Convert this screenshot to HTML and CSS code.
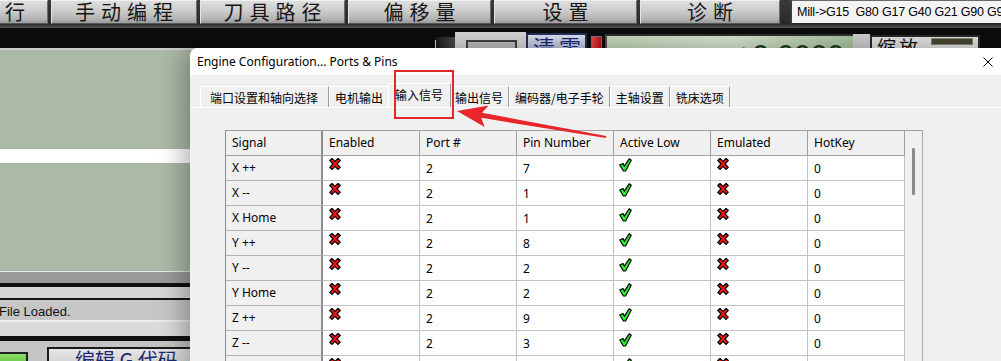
FILE: index.html
```html
<!DOCTYPE html>
<html lang="zh">
<head>
<meta charset="utf-8">
<title>Engine Configuration... Ports &amp; Pins</title>
<link rel="stylesheet" href="styles.css">
</head>
<body>
<div class="app">
  <div class="menubar">
    <div class="mbtn first">行</div>
    <div class="mbtn w146">手动编程</div>
    <div class="mbtn w145">刀具路径</div>
    <div class="mbtn w143">偏移量</div>
    <div class="mbtn w143">设置</div>
    <div class="mbtn w140">诊断</div>
    <div class="gcode">Mill-&gt;G15&nbsp; G80 G17 G40 G21 G90 G94 G54 G49 G99 G64 G97</div>
  </div>
  <div class="toolrow">
    <div class="tr-tick"></div>
    <div class="tr-dark"></div>
    <div class="tr-panel"><div class="tr-btn"></div></div>
    <div class="tr-zero">清零</div>
    <div class="tr-led"></div>
    <div class="tr-dro">+0.0000</div>
    <div class="tr-gap"></div>
    <div class="tr-zoom">缩放<span class="tr-zoombar"></span></div>
  </div>
  <div class="leftpanel">
    <div class="lp lp-top"></div>
    <div class="lp lp-green g1"></div>
    <div class="lp lp-white"></div>
    <div class="lp lp-green g2"></div>
    <div class="lp lp-hl"></div>
    <div class="lp lp-mid"></div>
    <div class="lp lp-black4"></div>
    <div class="lp lp-light"></div>
    <div class="lp lp-black2"></div>
    <div class="lp status">File Loaded.</div>
    <div class="lp lp-hl2"></div>
    <div class="lp lp-light2"></div>
    <div class="lp lp-black5"></div>
    <div class="lp-buttons">
      <div class="gbtn"></div>
      <div class="editbtn">编辑 G 代码</div>
    </div>
  </div>
</div>

<div class="dialog">
  <div class="titlebar">
    <span class="title">Engine Configuration... Ports &amp; Pins</span>
    <svg class="close" width="10" height="10" viewBox="0 0 10 10"><path d="M0.5 0.5 L9.5 9.5 M9.5 0.5 L0.5 9.5" stroke="#000" stroke-width="1" fill="none"/></svg>
  </div>
  <div class="tabs">
    <div class="tab wide">端口设置和轴向选择</div>
    <div class="tab">电机输出</div>
    <div class="tab active">输入信号</div>
    <div class="tab">输出信号</div>
    <div class="tab">编码器/电子手轮</div>
    <div class="tab">主轴设置</div>
    <div class="tab">铣床选项</div>
  </div>
  <div class="tabpanel">
    <div class="table">
      <div class="grid">
        <div class="hc first">Signal</div>
        <div class="hc">Enabled</div>
        <div class="hc">Port #</div>
        <div class="hc">Pin Number</div>
        <div class="hc">Active Low</div>
        <div class="hc">Emulated</div>
        <div class="hc">HotKey</div>

        <div class="rh">X ++</div><div class="dc"><svg class="ix" viewBox="0 0 12 12"><use href="#xicon"/></svg></div><div class="dc">2</div><div class="dc">7</div><div class="dc"><svg class="ic" viewBox="0 0 13 14"><use href="#checkicon"/></svg></div><div class="dc"><svg class="ix" viewBox="0 0 12 12"><use href="#xicon"/></svg></div><div class="dc">0</div>
        <div class="rh">X --</div><div class="dc"><svg class="ix" viewBox="0 0 12 12"><use href="#xicon"/></svg></div><div class="dc">2</div><div class="dc">1</div><div class="dc"><svg class="ic" viewBox="0 0 13 14"><use href="#checkicon"/></svg></div><div class="dc"><svg class="ix" viewBox="0 0 12 12"><use href="#xicon"/></svg></div><div class="dc">0</div>
        <div class="rh">X Home</div><div class="dc"><svg class="ix" viewBox="0 0 12 12"><use href="#xicon"/></svg></div><div class="dc">2</div><div class="dc">1</div><div class="dc"><svg class="ic" viewBox="0 0 13 14"><use href="#checkicon"/></svg></div><div class="dc"><svg class="ix" viewBox="0 0 12 12"><use href="#xicon"/></svg></div><div class="dc">0</div>
        <div class="rh">Y ++</div><div class="dc"><svg class="ix" viewBox="0 0 12 12"><use href="#xicon"/></svg></div><div class="dc">2</div><div class="dc">8</div><div class="dc"><svg class="ic" viewBox="0 0 13 14"><use href="#checkicon"/></svg></div><div class="dc"><svg class="ix" viewBox="0 0 12 12"><use href="#xicon"/></svg></div><div class="dc">0</div>
        <div class="rh">Y --</div><div class="dc"><svg class="ix" viewBox="0 0 12 12"><use href="#xicon"/></svg></div><div class="dc">2</div><div class="dc">2</div><div class="dc"><svg class="ic" viewBox="0 0 13 14"><use href="#checkicon"/></svg></div><div class="dc"><svg class="ix" viewBox="0 0 12 12"><use href="#xicon"/></svg></div><div class="dc">0</div>
        <div class="rh">Y Home</div><div class="dc"><svg class="ix" viewBox="0 0 12 12"><use href="#xicon"/></svg></div><div class="dc">2</div><div class="dc">2</div><div class="dc"><svg class="ic" viewBox="0 0 13 14"><use href="#checkicon"/></svg></div><div class="dc"><svg class="ix" viewBox="0 0 12 12"><use href="#xicon"/></svg></div><div class="dc">0</div>
        <div class="rh">Z ++</div><div class="dc"><svg class="ix" viewBox="0 0 12 12"><use href="#xicon"/></svg></div><div class="dc">2</div><div class="dc">9</div><div class="dc"><svg class="ic" viewBox="0 0 13 14"><use href="#checkicon"/></svg></div><div class="dc"><svg class="ix" viewBox="0 0 12 12"><use href="#xicon"/></svg></div><div class="dc">0</div>
        <div class="rh">Z --</div><div class="dc"><svg class="ix" viewBox="0 0 12 12"><use href="#xicon"/></svg></div><div class="dc">2</div><div class="dc">3</div><div class="dc"><svg class="ic" viewBox="0 0 13 14"><use href="#checkicon"/></svg></div><div class="dc"><svg class="ix" viewBox="0 0 12 12"><use href="#xicon"/></svg></div><div class="dc">0</div>
        <div class="rh">Z Home</div><div class="dc"><svg class="ix" viewBox="0 0 12 12"><use href="#xicon"/></svg></div><div class="dc">2</div><div class="dc">3</div><div class="dc"><svg class="ic" viewBox="0 0 13 14"><use href="#checkicon"/></svg></div><div class="dc"><svg class="ix" viewBox="0 0 12 12"><use href="#xicon"/></svg></div><div class="dc">0</div>
      </div>
      <div class="vscroll"><div class="thumb"></div></div>
    </div>
  </div>
</div>

<div class="redbox"></div>
<svg class="arrow" width="1001" height="361" viewBox="0 0 1001 361">
  <polygon points="457,111 488.5,105.4 482,112.8 606.2,136 605.8,138 481.2,117.8 484.7,127" fill="#e8262a"/>
</svg>

<svg class="defs" width="0" height="0">
  <defs>
    <g id="xicon">
      <polygon points="0.8,2.4 3,0.4 6,3.4 9,0.4 11.2,2.4 8.1,5.8 11.2,9.2 9,11.4 6,8.3 3,11.4 0.8,9.4 3.9,5.8" fill="#f21414" stroke="#000" stroke-width="1.2" stroke-linejoin="miter"/>
    </g>
    <g id="checkicon">
      <polygon points="0.8,7 4,5.6 5.4,8 10.2,0.8 12.2,2.2 6.6,13 4.4,13" fill="#2cf02c" stroke="#000" stroke-width="1.2" stroke-linejoin="miter"/>
    </g>
  </defs>
</svg>
</body>
</html>
```
FILE: styles.css
```css
html, body {
  margin: 0;
  padding: 0;
  width: 1001px;
  height: 361px;
  overflow: hidden;
  background: #0c0c0c;
}
body {
  position: relative;
  font-family: "Noto Sans", "Noto Sans CJK SC", sans-serif;
}
.app {
  width: 1001px;
  height: 361px;
  display: flex;
  flex-direction: column;
}

/* top menu bar */
.menubar {
  height: 28px;
  display: flex;
  gap: 3px;
  background: linear-gradient(#3a3a3a, #2a2a2a 85%, #555 100%);
  flex: none;
}
.mbtn {
  height: 24px;
  box-sizing: border-box;
  background: linear-gradient(#dedede 0%, #cfcfcf 40%, #b4b4b4 80%, #9c9c9c 100%);
  border-top: 1px solid #f2f2f2;
  border-left: 1px solid #e6e6e6;
  border-right: 1px solid #6a6a6a;
  border-bottom: 1px solid #555;
  font-family: "Noto Sans CJK SC", sans-serif;
  font-size: 20px;
  letter-spacing: 6px;
  color: #151515;
  line-height: 22px;
  text-align: center;
  padding-left: 6px;
  white-space: nowrap;
}
.mbtn.first { width: 48px; text-align: left; padding-left: 5px; border-left: none; }
.w146 { width: 146px; }
.w145 { width: 145px; }
.w143 { width: 143px; }
.w140 { width: 140px; }
.gcode {
  margin-left: 7px;
  flex: 1;
  min-width: 0;
  height: 23px;
  box-sizing: border-box;
  background: #f4f4f4;
  border-left: 2px solid #3c3c3c;
  border-top: 1px solid #6a6a6a;
  font-family: "Liberation Sans", Arial, sans-serif;
  font-size: 12.5px;
  letter-spacing: -0.2px;
  line-height: 22px;
  padding-left: 5px;
  white-space: nowrap;
  overflow: hidden;
  color: #000;
}

/* second tool row */
.toolrow {
  height: 20px;
  flex: none;
  display: flex;
  align-items: stretch;
  background: #0c0c0c;
}
.tr-tick { margin-left: 435px; width: 1px; margin-top: 12px; background: #d8d8d8; }
.tr-dark { width: 19px; margin-top: 9px; background: linear-gradient(90deg, #1a1a1a, #4a4a4a); }
.tr-panel { width: 71px; margin-top: 4px; background: #d6d6d6; padding: 8px 0 0 11px; box-sizing: border-box; }
.tr-btn { width: 51px; height: 100%; box-sizing: border-box; border: 2px solid #404040; border-bottom: none; background: #bdbdbd; }
.tr-zero {
  width: 61px;
  margin-top: 5px;
  box-sizing: border-box;
  border: 2px solid #25305a;
  border-bottom: none;
  background: linear-gradient(#dce2f0, #bcc6de);
  font-family: "Noto Sans CJK SC", sans-serif;
  font-size: 22px;
  letter-spacing: 4px;
  line-height: 22px;
  color: #1c2a78;
  padding-left: 5px;
  overflow: hidden;
}
.tr-led { width: 11px; margin: 8px 0 0 4px; box-sizing: border-box; border: 1px solid #777; border-bottom: none; background: linear-gradient(90deg, #f04848, #c01010); }
.tr-dro {
  width: 248px;
  margin: 6px 0 0 3px;
  box-sizing: border-box;
  border-top: 2px solid #303030;
  border-left: 2px solid #505050;
  background: linear-gradient(90deg, #c4d8bc, #d8e6d0 50%, #a8c4a0);
  font-family: "Liberation Sans", Arial, sans-serif;
  font-size: 30px;
  line-height: 30px;
  padding-top: 4px;
  padding-right: 9px;
  text-align: right;
  color: #1c3a1c;
  overflow: hidden;
  white-space: nowrap;
}
.tr-gap { width: 17px; margin-top: 6px; background: #cfcfcf; }
.tr-zoom {
  width: 110px;
  margin-top: 7px;
  box-sizing: border-box;
  border: 2px solid #2a2a2a;
  border-bottom: none;
  background: #e4e4e4;
  font-family: "Noto Sans CJK SC", sans-serif;
  font-size: 19px;
  letter-spacing: 3px;
  line-height: 19px;
  padding-left: 5px;
  color: #111;
  display: flex;
  overflow: hidden;
  white-space: nowrap;
}
.tr-zoombar { width: 40px; height: 5px; margin: 1px 0 0 10px; background: #4a4632; border: 1px solid #8a8a7a; flex: none; }

/* left area */
.leftpanel {
  width: 200px;
  flex: 1;
  display: flex;
  flex-direction: column;
  background: #c6c6c6;
}
.lp { flex: none; }
.lp-top { height: 2px; background: #cfcfcf; }
.lp-green { background: #abb9a7; }
.g1 { height: 99px; }
.lp-white { height: 14px; background: #ffffff; }
.g2 { height: 108px; }
.lp-hl { height: 1px; background: #e8e8e8; }
.lp-mid { height: 11px; background: #9a9a9a; }
.lp-black4 { height: 4px; background: #101010; }
.lp-light { height: 11px; background: #d6d6d6; }
.lp-black2 { height: 2px; background: #151515; }
.status {
  height: 20px;
  background: #c6c6c6;
  font-family: "Liberation Sans", Arial, sans-serif;
  font-size: 13px;
  line-height: 24px;
  color: #111;
  margin-left: -1px;
  white-space: nowrap;
}
.lp-hl2 { height: 2px; background: #ececec; }
.lp-light2 { height: 14px; background: #dadada; }
.lp-black5 { height: 5px; background: #111; }
.lp-buttons {
  flex: 1;
  display: flex;
  align-items: flex-start;
  background: #c4c4c4;
}
.gbtn {
  width: 28px;
  height: 20px;
  margin-top: 11px;
  box-sizing: border-box;
  border: 2px solid #202020;
  border-left: none;
  background: linear-gradient(#8ee06a, #4fb030);
}
.editbtn {
  margin: 6px 0 0 19px;
  width: 150px;
  height: 20px;
  box-sizing: border-box;
  border-top: 2px solid #1a1a1a;
  border-left: 2px solid #1a1a1a;
  background: linear-gradient(#e6e6e6, #cfcfcf);
  font-family: "Noto Sans CJK SC", sans-serif;
  font-size: 20px;
  line-height: 22px;
  padding-left: 26px;
  color: #1a2a6e;
  white-space: nowrap;
  overflow: hidden;
}

/* dialog window */
.dialog {
  position: absolute;
  left: 190px;
  top: 48px;
  width: 820px;
  height: 330px;
  background: #f0f0f0;
  border-top-left-radius: 8px;
  box-shadow: -6px 0 26px rgba(0, 0, 0, 0.32);
  overflow: hidden;
}
.titlebar {
  height: 27px;
  background: #ffffff;
  display: flex;
  align-items: center;
  padding: 0 17px 0 7px;
}
.title {
  font-family: "Noto Sans", sans-serif;
  font-size: 12px;
  color: #000;
  line-height: 14px;
  padding-top: 1px;
}
.close { margin-left: auto; margin-top: 1px; flex: none; }

.tabs {
  display: flex;
  align-items: flex-end;
  margin: 11px 0 0 10px;
  height: 21px;
}
.tab {
  height: 21px;
  box-sizing: border-box;
  padding: 0 5px;
  border-top: 1px solid #ffffff;
  border-left: 1px solid #ffffff;
  border-right: 1px solid #9a9a9a;
  font-family: "Noto Sans CJK SC", sans-serif;
  font-size: 12px;
  line-height: 21px;
  color: #000;
  white-space: nowrap;
}
.tab.wide { padding: 0 10px 0 9px; }
.tab.active {
  height: 24px;
  margin: 0 -2px 0 -1px;
  padding: 0 7px 0 6px;
  line-height: 21px;
  position: relative;
  z-index: 1;
  background: #f0f0f0;
}

.tabpanel {
  border-top: 1px solid #ffffff;
  padding: 22px 0 0 35px;
}
.table {
  display: flex;
  width: fit-content;
  border-top: 1px solid #a0a0a0;
  border-left: 1px solid #8a8a8a;
  border-right: 1px solid #a8a8a8;
  background: #ffffff;
}
.grid {
  display: grid;
  grid-template-columns: repeat(7, 97px);
  grid-auto-rows: 25px;
}
.hc, .rh, .dc {
  box-sizing: border-box;
  font-family: "Noto Sans", sans-serif;
  font-size: 12px;
  color: #000;
  line-height: 24px;
  padding-left: 6px;
  white-space: nowrap;
  overflow: hidden;
}
.hc {
  background: #f0f0f0;
  border-right: 1px solid #a0a0a0;
  border-bottom: 1px solid #a0a0a0;
}
.hc.first { border-right: 2px solid #8c8c8c; }
.rh {
  background: #f0f0f0;
  border-right: 2px solid #8c8c8c;
  border-bottom: 1px solid #b4b4b4;
}
.dc {
  background: #ffffff;
  border-right: 1px solid #c4c4c4;
  border-bottom: 1px solid #c4c4c4;
  line-height: 26px;
  position: relative;
}
.ix {
  position: absolute;
  left: 6px;
  top: 2px;
  width: 12px;
  height: 12px;
}
.ic {
  position: absolute;
  left: 5px;
  top: 2px;
  width: 13px;
  height: 14px;
}
.vscroll {
  width: 17px;
  background: #f0f0f0;
  position: relative;
}
.thumb {
  position: absolute;
  left: 7px;
  top: 17px;
  width: 3px;
  height: 47px;
  background: #8c8c8c;
  border-radius: 1px;
}

/* annotation overlays */
.redbox {
  position: absolute;
  left: 394px;
  top: 70px;
  width: 60px;
  height: 49px;
  box-sizing: border-box;
  border: 2px solid #e3262a;
  z-index: 5;
}
.arrow {
  position: absolute;
  left: 0;
  top: 0;
  z-index: 6;
  pointer-events: none;
}
.defs { position: absolute; width: 0; height: 0; }
```
